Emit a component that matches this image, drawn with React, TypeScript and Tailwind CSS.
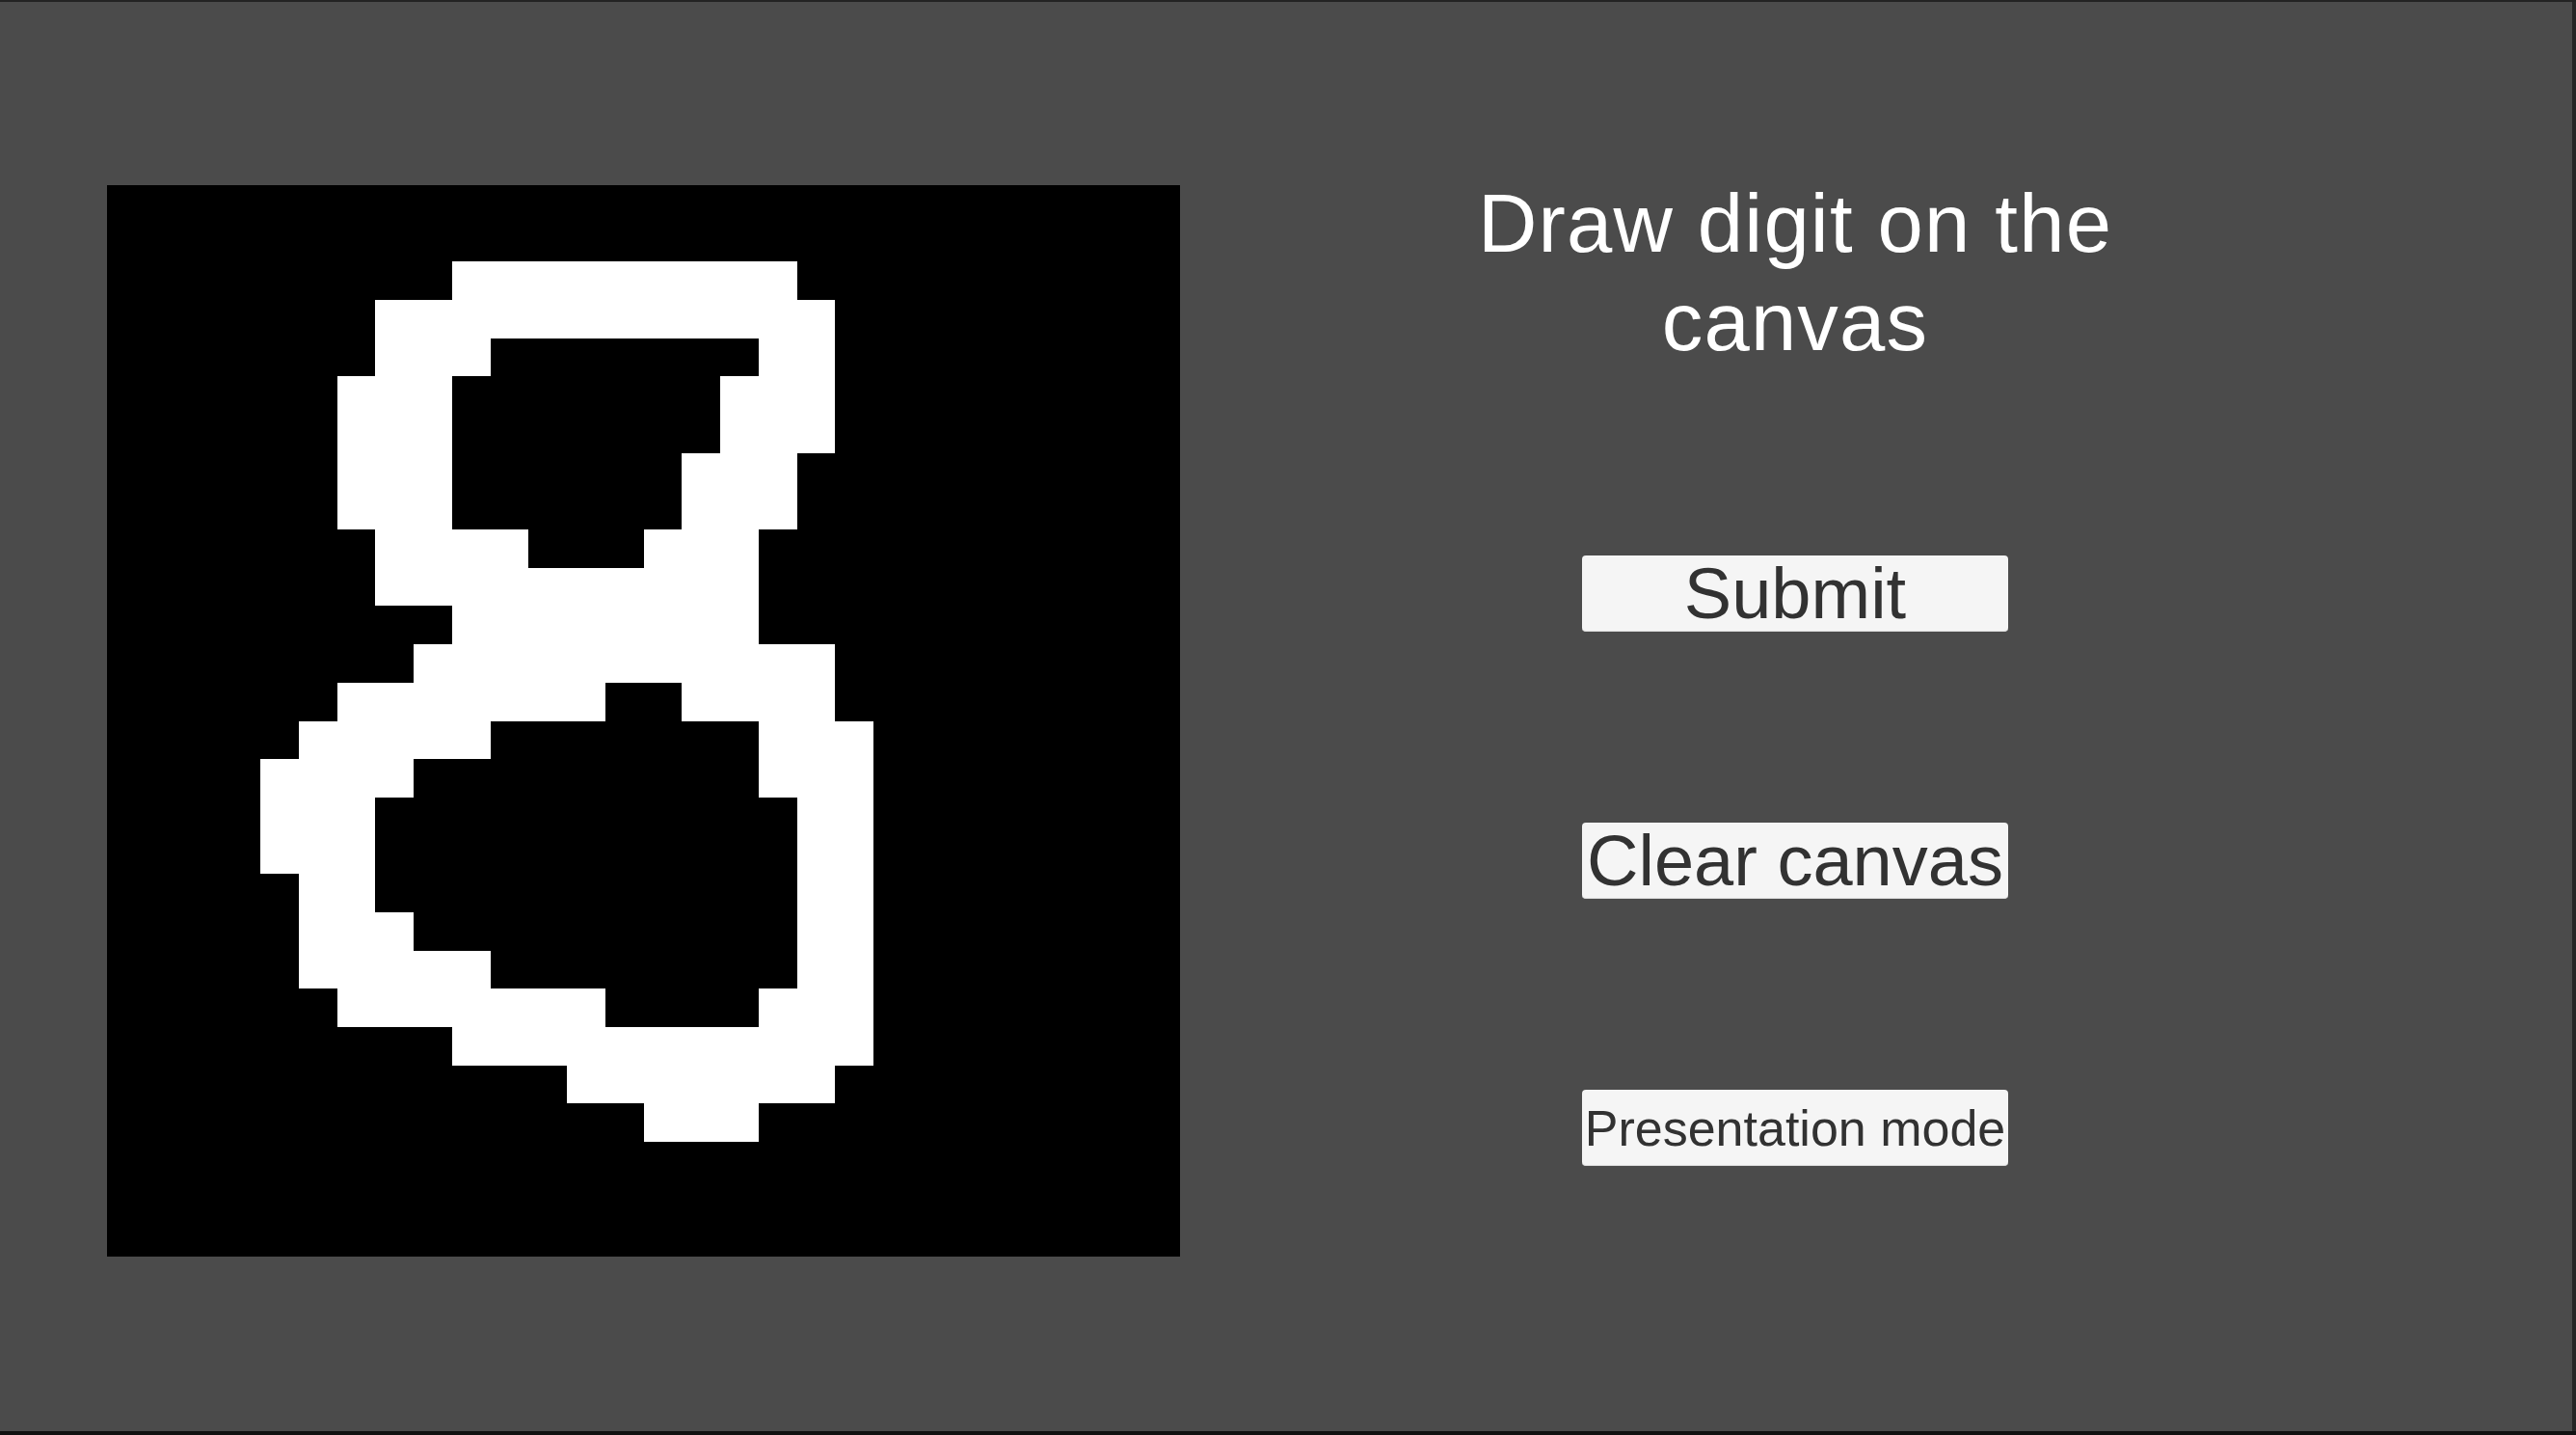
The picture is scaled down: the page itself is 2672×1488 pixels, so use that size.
import React from "react";

const RUNS: [number, number, number][] = [
  [2, 9, 17],
  [3, 7, 18],
  [4, 7, 9], [4, 17, 18],
  [5, 6, 8], [5, 16, 18],
  [6, 6, 8], [6, 16, 18],
  [7, 6, 8], [7, 15, 17],
  [8, 6, 8], [8, 15, 17],
  [9, 7, 10], [9, 14, 16],
  [10, 7, 16],
  [11, 9, 16],
  [12, 8, 18],
  [13, 6, 12], [13, 15, 18],
  [14, 5, 9], [14, 17, 19],
  [15, 4, 7], [15, 17, 19],
  [16, 4, 6], [16, 18, 19],
  [17, 4, 6], [17, 18, 19],
  [18, 5, 6], [18, 18, 19],
  [19, 5, 7], [19, 18, 19],
  [20, 5, 9], [20, 18, 19],
  [21, 6, 12], [21, 17, 19],
  [22, 9, 19],
  [23, 12, 18],
  [24, 14, 16],
];

function DigitCanvas() {
  return (
    <svg
      width={1113}
      height={1111}
      viewBox="0 0 28 28"
      preserveAspectRatio="none"
      shapeRendering="crispEdges"
      className="block shrink-0"
    >
      <rect x={0} y={0} width={28} height={28} fill="#000000" />
      {RUNS.map(([r, a, b], i) => (
        <rect key={i} x={a} y={r} width={b - a + 1} height={1} fill="#ffffff" />
      ))}
    </svg>
  );
}

function UButton({ label, size }: { label: string; size: "lg" | "sm" }) {
  return (
    <button
      className={
        "w-[442px] h-[79px] shrink-0 rounded-[4px] bg-[#f5f5f5] border-b border-[#dcdcdc] text-[#323232] flex items-center justify-center whitespace-nowrap pt-[2px] " +
        (size === "lg" ? "text-[74px] leading-[84px]" : "text-[52px] leading-[60px]")
      }
      style={{ fontFamily: '"Liberation Sans", Arial, sans-serif' }}
    >
      {label}
    </button>
  );
}

export default function App() {
  return (
    <div
      className="w-[2672px] h-[1488px] flex flex-col bg-[#111111] overflow-hidden"
      style={{ fontFamily: '"Liberation Sans", Arial, sans-serif' }}
    >
      <div className="h-[2px] w-full bg-[#232323] shrink-0" />
      <div className="flex flex-row h-[1482px] shrink-0">
        <div className="w-[2668px] h-full bg-[#4b4b4b] flex flex-row items-start pl-[111px] pt-[179px]">
          <div className="mt-[11px]">
            <DigitCanvas />
          </div>
          <div className="w-[1276px] flex flex-col items-center">
            <div className="text-white text-[85px] leading-[101.6px] tracking-[1.2px] text-center">
              <div>Draw digit on the</div>
              <div>canvas</div>
            </div>
            <div className="mt-[192px] flex flex-col items-center gap-[198px]">
              <UButton label="Submit" size="lg" />
              <UButton label="Clear canvas" size="lg" />
              <UButton label="Presentation mode" size="sm" />
            </div>
          </div>
        </div>
        <div className="w-[4px] h-full bg-[#262626]" />
      </div>
      <div className="h-[4px] w-full bg-[#111111] shrink-0" />
    </div>
  );
}
